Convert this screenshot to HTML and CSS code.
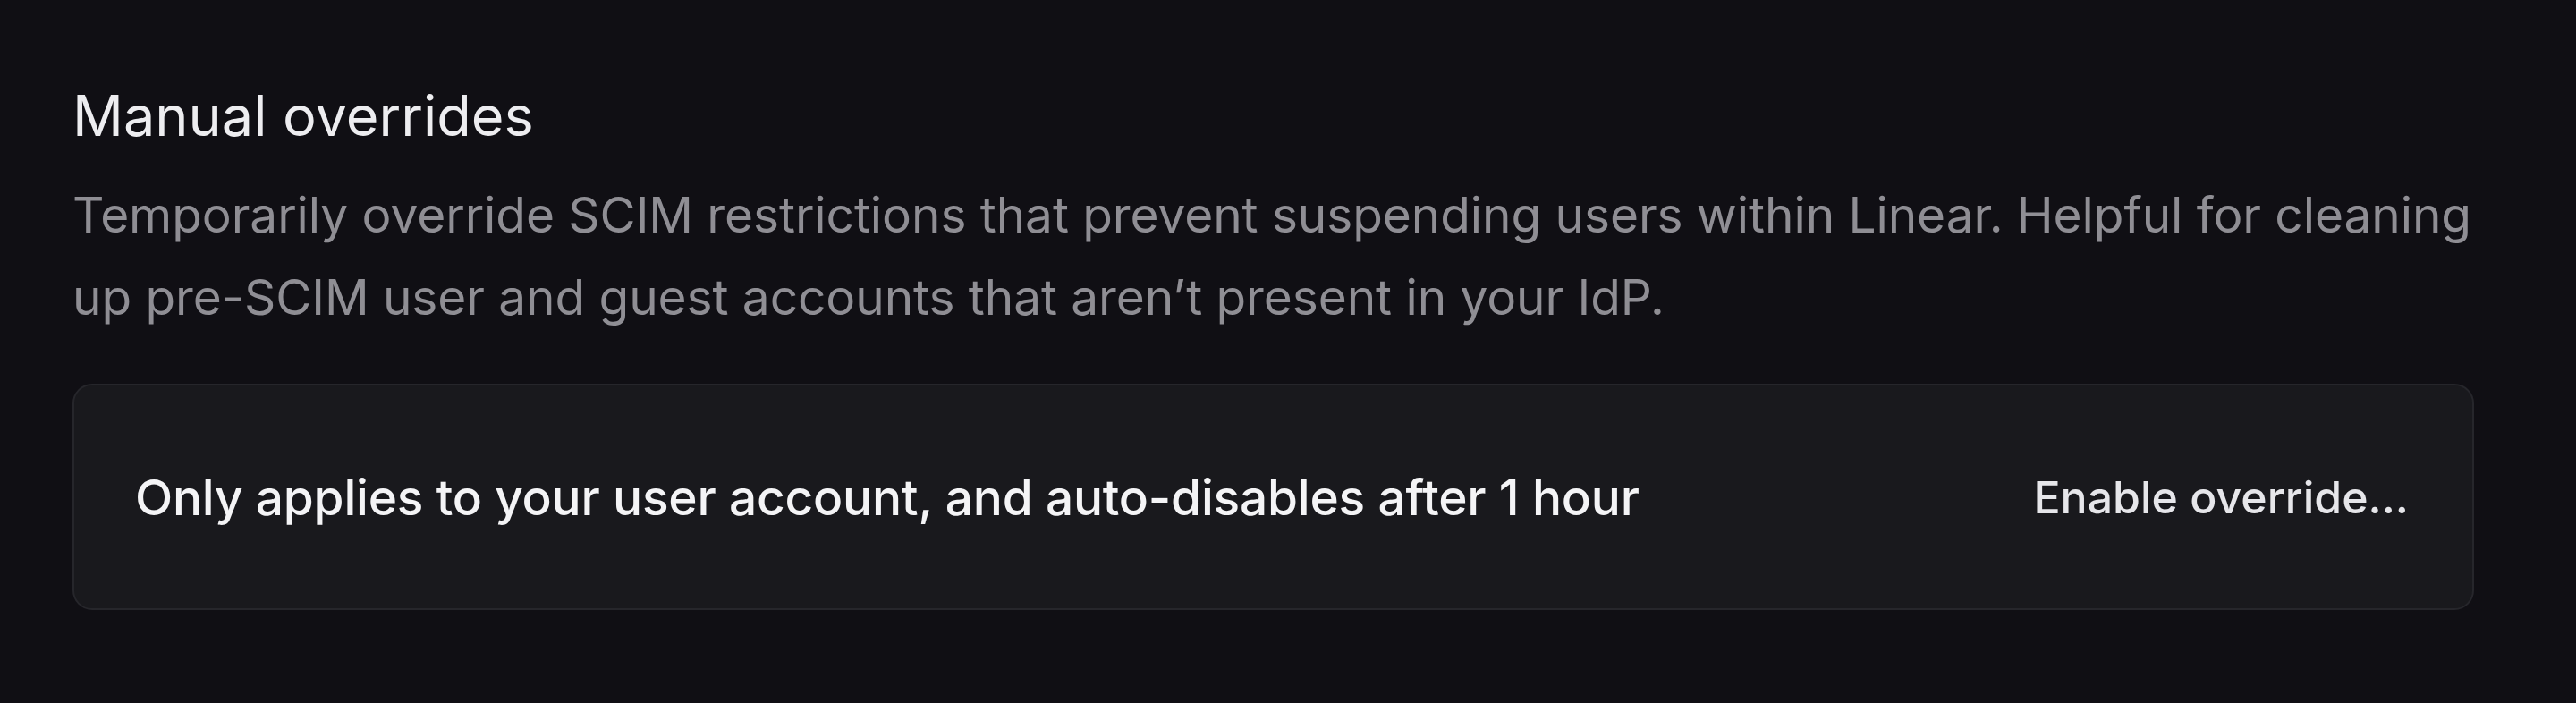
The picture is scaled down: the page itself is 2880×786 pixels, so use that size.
FILE: index.html
```html
<!DOCTYPE html>
<html lang="en">
<head>
<meta charset="utf-8">
<title>Manual overrides</title>
<link rel="stylesheet" href="styles.css">
</head>
<body>
<main class="page">
  <section class="section">
    <h2 class="title">Manual overrides</h2>
    <p class="desc">Temporarily override SCIM restrictions that prevent suspending users within Linear. Helpful for cleaning up pre-SCIM user and guest accounts that aren’t present in your IdP.</p>
    <div class="card">
      <span class="card-text">Only applies to your user account, and auto-disables after 1 hour</span>
      <button class="btn" type="button">Enable override...</button>
    </div>
  </section>
</main>
</body>
</html>
```
FILE: styles.css
```css
* { box-sizing: border-box; }
html, body {
  margin: 0;
  padding: 0;
  background: #100f14;
  height: 100%;
}
body {
  font-family: Inter, "Noto Sans", sans-serif;
  -webkit-font-smoothing: antialiased;
}
.page {
  padding: 91px 114px 0 81px;
}
.section {
  display: flex;
  flex-direction: column;
}
.title {
  margin: 0;
  font-size: 63px;
  line-height: 76px;
  font-weight: 400;
  color: #ededf0;
}
.desc {
  margin: 27px -12px 0 0;
  font-size: 55px;
  line-height: 92px;
  font-weight: 400;
  letter-spacing: -0.08px;
  color: #8f8e94;
}
.card {
  margin-top: 51px;
  height: 253px;
  border: 2px solid #26262b;
  border-radius: 22px;
  background: #19191d;
  display: flex;
  align-items: center;
  justify-content: space-between;
  padding: 0 71px 0 68px;
}
.card-text {
  font-size: 55px;
  font-weight: 500;
  letter-spacing: -0.2px;
  color: #f4f4f6;
}
.btn {
  font-family: inherit;
  background: none;
  border: none;
  padding: 0;
  font-size: 50px;
  font-weight: 500;
  color: #e6e6ea;
}
```
